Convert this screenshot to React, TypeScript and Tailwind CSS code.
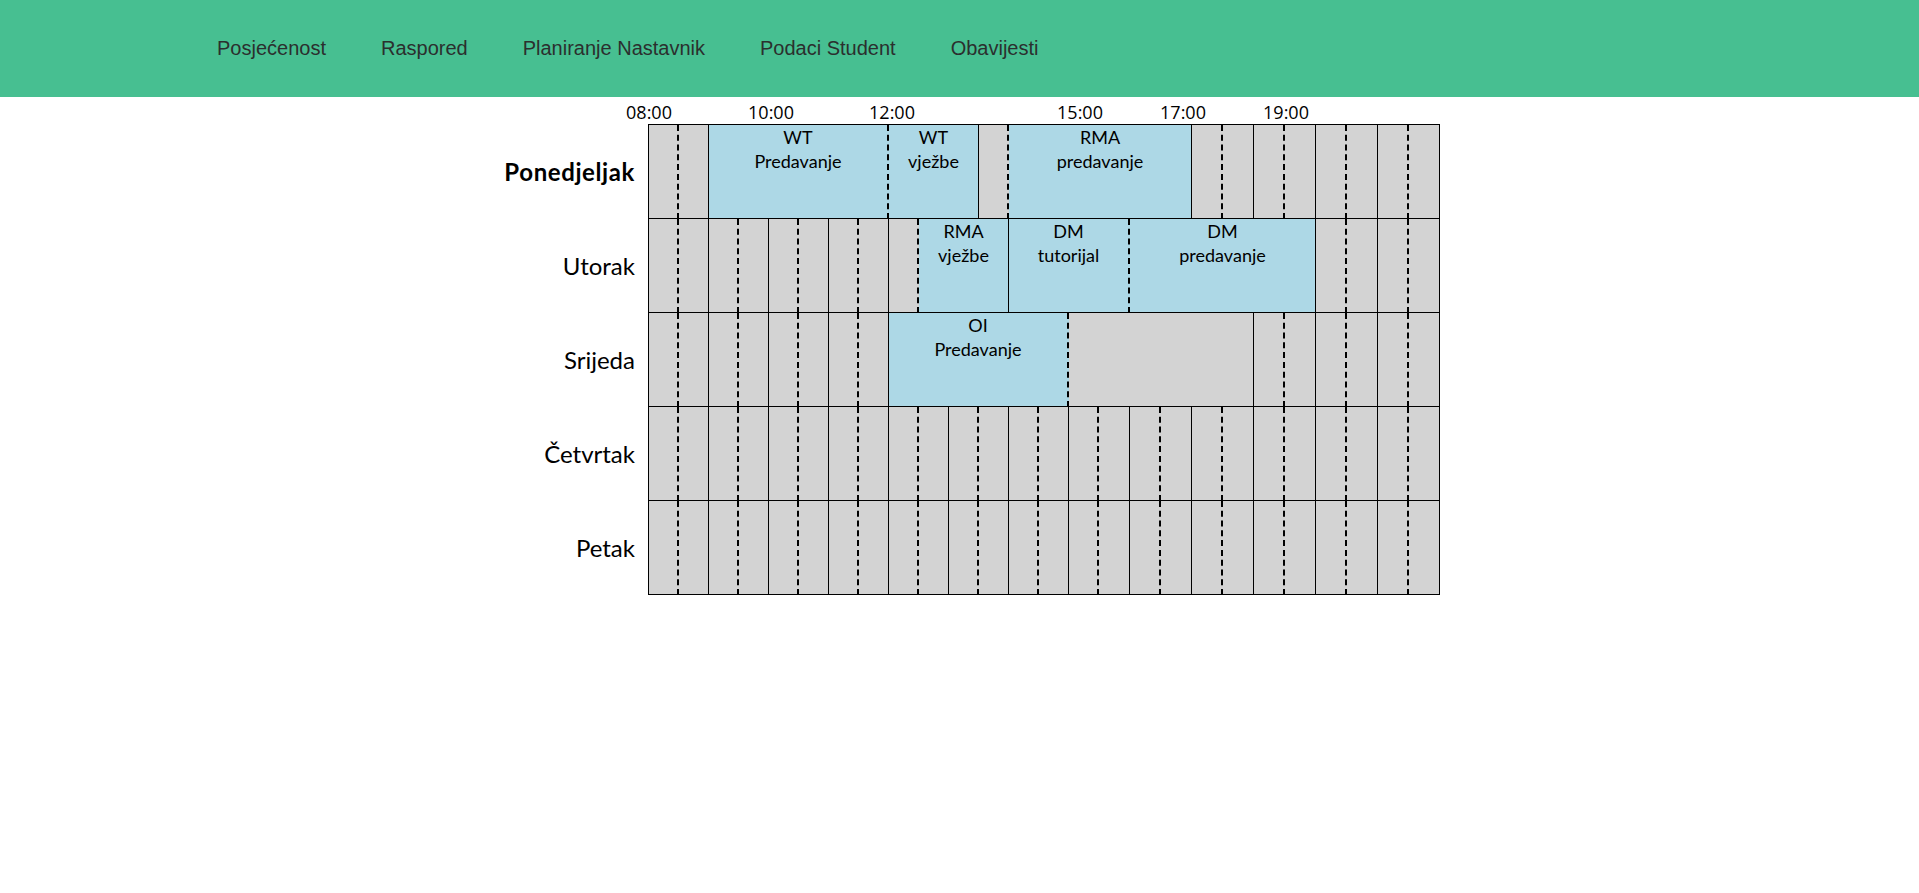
import React from "react";

type Cell = { span: number; title?: string; sub?: string; event?: boolean };

const one = (n: number): Cell[] => Array.from({ length: n }, () => ({ span: 1 }));

const days: { name: string; bold?: boolean; cells: Cell[] }[] = [
  {
    name: "Ponedjeljak",
    bold: true,
    cells: [
      ...one(2),
      { span: 6, title: "WT", sub: "Predavanje", event: true },
      { span: 3, title: "WT", sub: "vježbe", event: true },
      ...one(1),
      { span: 6, title: "RMA", sub: "predavanje", event: true },
      ...one(8),
    ],
  },
  {
    name: "Utorak",
    cells: [
      ...one(9),
      { span: 3, title: "RMA", sub: "vježbe", event: true },
      { span: 4, title: "DM", sub: "tutorijal", event: true },
      { span: 6, title: "DM", sub: "predavanje", event: true },
      ...one(4),
    ],
  },
  {
    name: "Srijeda",
    cells: [
      ...one(8),
      { span: 6, title: "OI", sub: "Predavanje", event: true },
      { span: 6 },
      ...one(6),
    ],
  },
  { name: "Četvrtak", cells: one(26) },
  { name: "Petak", cells: one(26) },
];

const spanClass: Record<number, string> = {
  1: "col-span-1",
  3: "col-span-3",
  4: "col-span-4",
  6: "col-span-6",
};

const nav = ["Posjećenost", "Raspored", "Planiranje Nastavnik", "Podaci Student", "Obavijesti"];

export default function App() {
  return (
    <div className="min-h-screen bg-white">
      {/* Top navigation */}
      <header className="h-[97px] bg-[#47bf91] flex items-center pl-[217px]">
        <ul className="flex gap-[55px] font-['Liberation_Sans',Arial,sans-serif] text-[20px] leading-[23px] text-[#2b2f2e]">
          {nav.map((item) => (
            <li key={item} className="cursor-pointer">
              {item}
            </li>
          ))}
        </ul>
      </header>

      {/* Timetable */}
      <div className="w-[961px] mx-auto">
        <div className="flex items-end h-[27px] pl-[140px] font-['Open_Sans',sans-serif] text-[18px] leading-[24px] text-black">
          <span className="w-[60px] text-center">08:00</span>
          <span className="w-[60px] text-center ml-[62px]">10:00</span>
          <span className="w-[60px] text-center ml-[61px]">12:00</span>
          <span className="w-[60px] text-center ml-[128px]">15:00</span>
          <span className="w-[60px] text-center ml-[43px]">17:00</span>
          <span className="w-[60px] text-center ml-[43px]">19:00</span>
        </div>

        <div className="flex font-[Lato,sans-serif] text-black">
          <div className="w-[169px] pt-px flex flex-col">
            {days.map((d) => (
              <div
                key={d.name}
                className={`h-[94px] flex items-center justify-end pr-[13px] text-[24px] ${
                  d.bold ? "font-bold tracking-[0.6px]" : ""
                }`}
              >
                {d.name}
              </div>
            ))}
          </div>

          <div className="border-l border-t border-black">
            {days.map((d) => (
              <div key={d.name} className="grid grid-cols-[repeat(15,30px)_repeat(11,31px)]">
                {d.cells.map((c, i) => (
                  <div
                    key={i}
                    className={`h-[94px] border-b border-black ${spanClass[c.span]} ${
                      i % 2 === 0 ? "border-r-2 [border-right-style:dashed]" : "border-r"
                    } ${c.event ? "bg-[#add8e6]" : "bg-[#d3d3d3]"} text-center text-[18px] leading-[24px]`}
                  >
                    {c.title && (
                      <>
                        <div>{c.title}</div>
                        <div>{c.sub}</div>
                      </>
                    )}
                  </div>
                ))}
              </div>
            ))}
          </div>
        </div>
      </div>
    </div>
  );
}
